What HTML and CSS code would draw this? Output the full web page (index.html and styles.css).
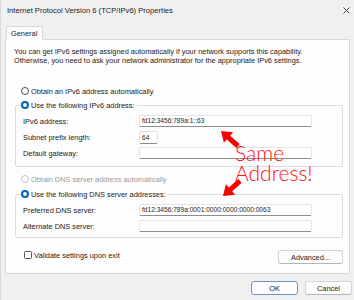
FILE: index.html
```html
<!DOCTYPE html>
<html>
<head>
<meta charset="utf-8">
<link rel="stylesheet" href="styles.css">
</head>
<body>
<div class="window">
  <div class="titlebar">
    <span class="title">Internet Protocol Version 6 (TCP/IPv6) Properties</span>
    <svg class="close" width="7" height="7" viewBox="0 0 7 7"><path d="M0.5 0.5L6.5 6.5M6.5 0.5L0.5 6.5" stroke="#333" stroke-width="0.9"/></svg>
  </div>
  <div class="tabs"><div class="tab">General</div></div>
  <div class="panel">
    <p class="intro">You can get IPv6 settings assigned automatically if your network supports this capability.<br>Otherwise, you need to ask your network administrator for the appropriate IPv6 settings.</p>

    <div class="opt first"><span class="radio"></span><span>Obtain an IPv6 address automatically</span></div>
    <fieldset class="group g1">
      <legend class="opt"><span class="radio on"></span><span>Use the following IPv6 address:</span></legend>
      <div class="row"><span class="lbl">IPv6 address:</span><span class="field wide">fd12:3456:789a:1::63</span></div>
      <div class="row"><span class="lbl">Subnet prefix length:</span><span class="field short">64</span></div>
      <div class="row"><span class="lbl">Default gateway:</span><span class="field wide"></span></div>
    </fieldset>

    <div class="opt dis"><span class="radio"></span><span>Obtain DNS server address automatically</span></div>
    <fieldset class="group g2">
      <legend class="opt"><span class="radio on"></span><span>Use the following DNS server addresses:</span></legend>
      <div class="row"><span class="lbl">Preferred DNS server:</span><span class="field wide">fd12:3456:789a:0001:0000:0000:0000:0063</span></div>
      <div class="row"><span class="lbl">Alternate DNS server:</span><span class="field wide"></span></div>
    </fieldset>

    <div class="bottomrow">
      <div class="check"><span class="box"></span><span>Validate settings upon exit</span></div>
      <div class="btn adv">Advanced...</div>
    </div>
  </div>
  <div class="footer">
    <div class="btn ok">OK</div>
    <div class="btn">Cancel</div>
  </div>

  <div class="note">Same<br>Address!</div>
  <svg class="arrow a1" width="26" height="25" viewBox="0 0 26 25"><polygon points="4,4 16.1,5.35 13.15,8.7 22.65,17.1 19.35,20.9 9.85,12.5 6.9,15.85" fill="#ff0000"/></svg>
  <svg class="arrow a2" width="26" height="25" viewBox="0 0 26 25"><polygon points="4,21 16.1,19.65 13.15,16.3 22.65,7.9 19.35,4.1 9.85,12.5 6.9,9.15" fill="#ff0000"/></svg>
</div>
</body>
</html>
```
FILE: styles.css
```css
html, body {
  margin: 0;
  padding: 0;
}
body {
  font-family: "Liberation Sans", Arial, sans-serif;
  font-size: 7.4px;
  color: #1b1b1b;
  background: #f0f0f0;
}
.window {
  position: relative;
  width: 354px;
  height: 300px;
  overflow: hidden;
  background: #f0f0f0;
  display: flex;
  flex-direction: column;
  box-sizing: border-box;
  border-left: 1px solid #dadada;
}
.titlebar {
  height: 20px;
  display: flex;
  align-items: center;
  justify-content: space-between;
  padding: 0 4px 0 6px;
  flex: none;
}
.title {
  font-size: 7.6px;
}
.tabs {
  height: 19px;
  display: flex;
  align-items: flex-end;
  padding-left: 5px;
  flex: none;
}
.tab {
  position: relative;
  z-index: 1;
  height: 14px;
  box-sizing: border-box;
  padding: 0 5px 0 4px;
  line-height: 13px;
  background: #fdfdfd;
  border: 1px solid #d9d9d9;
  border-bottom: none;
  margin-bottom: -1px;
}
.panel {
  flex: none;
  margin: 0 4px 0 4px;
  height: 235px;
  box-sizing: border-box;
  background: #fdfdfd;
  border: 1px solid #d9d9d9;
  padding: 7px 6px 0 9px;
}
.intro {
  margin: 0 0 0 -1px;
  line-height: 9px;
}
.opt {
  display: flex;
  align-items: center;
  gap: 2px;
  height: 12px;
}
.opt.first {
  margin-left: 6px;
  margin-top: 20px;
}
.opt.dis {
  color: #9a9a9a;
  margin-left: 6px;
  margin-top: 6px;
}
.radio {
  width: 8px;
  height: 8px;
  box-sizing: border-box;
  border-radius: 50%;
  border: 1px solid #4a4a4a;
  background: #fff;
  flex: none;
}
.opt.dis .radio {
  border-color: #c4c4c4;
}
.radio.on {
  border: 2.4px solid #0063b1;
  background: #fff;
}
.group {
  margin: 2px 0 0 0;
  padding: 4px 0 7px 0;
  border: 1px solid #dcdcdc;
  border-radius: 2px;
  min-width: 0;
}
.group.g2 {
  margin-top: 3px;
  padding-bottom: 5px;
}
.group legend {
  padding: 0 2px 0 0;
  margin-left: 5px;
}
.row {
  display: flex;
  align-items: center;
  height: 12px;
}
.row + .row {
  margin-top: 4px;
}
.lbl {
  width: 116px;
  padding-left: 7px;
  flex: none;
}
.field {
  height: 12px;
  box-sizing: border-box;
  background: #fff;
  border: 1px solid #e3e3e3;
  border-bottom-color: #8c8c8c;
  border-radius: 2px;
  padding: 0 2px;
  font-size: 6.6px;
  line-height: 10px;
  color: #222;
}
.field.wide {
  width: 173px;
}
.field.short {
  width: 19px;
  height: 13px;
  line-height: 11px;
}
.bottomrow {
  margin-top: 12px;
  display: flex;
  justify-content: space-between;
  align-items: flex-start;
}
.check {
  display: flex;
  align-items: center;
  gap: 2px;
  height: 10px;
  margin-left: 9px;
}
.box {
  width: 8px;
  height: 8px;
  box-sizing: border-box;
  border: 1px solid #555;
  border-radius: 1.5px;
  background: #fff;
}
.btn {
  height: 14px;
  box-sizing: border-box;
  width: 47px;
  background: #fdfdfd;
  border: 1px solid #d3d3d3;
  border-bottom-color: #b5b5b5;
  border-radius: 3px;
  display: flex;
  align-items: center;
  justify-content: center;
}
.btn.adv {
  width: 65px;
  margin-right: 0;
}
.footer {
  flex: none;
  display: flex;
  justify-content: flex-end;
  gap: 7px;
  margin-top: 7px;
  padding-right: 2px;
}
.btn.ok {
  border-color: #6b95c9;
}
.note {
  position: absolute;
  left: 234px;
  top: 143px;
  font-family: "Lato", "Liberation Sans", sans-serif;
  font-weight: 300;
  font-size: 21px;
  line-height: 20px;
  color: #ff1010;
}
.arrow {
  position: absolute;
}
.a1 {
  left: 216px;
  top: 127px;
}
.a2 {
  left: 218px;
  top: 175px;
}
```
